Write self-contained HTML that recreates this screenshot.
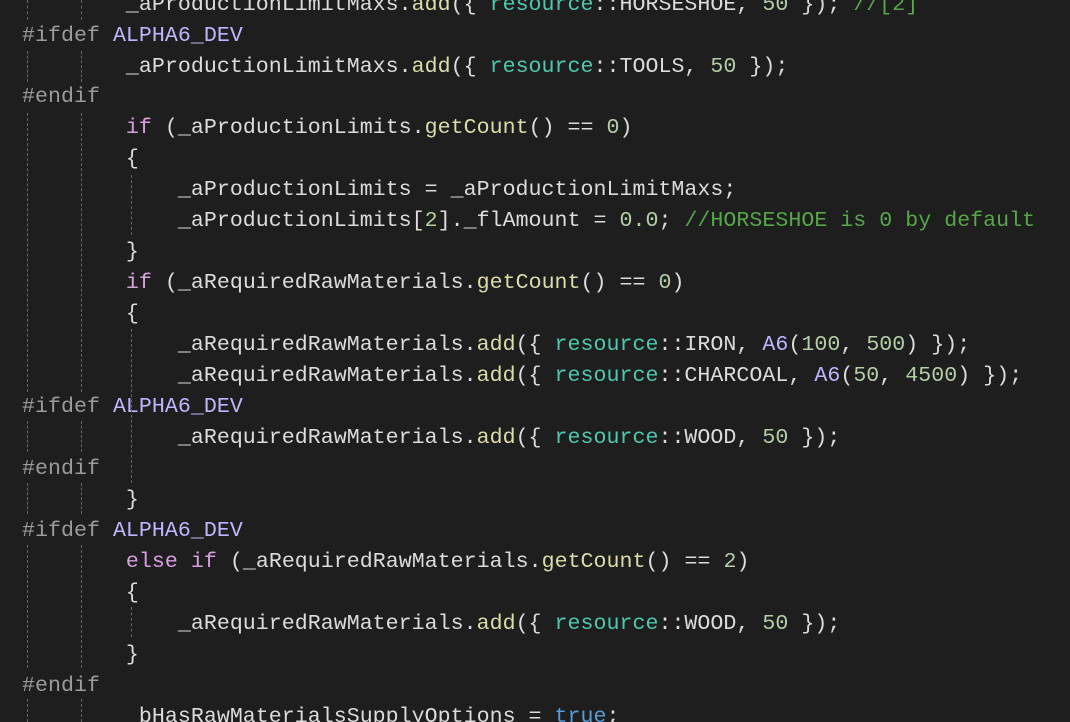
<!DOCTYPE html>
<html><head><meta charset="utf-8"><style>
html,body{margin:0;padding:0;background:#1e1e1e;width:1070px;height:722px;overflow:hidden;position:relative}
pre{position:absolute;left:22px;top:-10.4px;margin:0;font-family:"Liberation Mono",monospace;font-size:21.6px;letter-spacing:0.03px;line-height:30.95px;color:#dcdcdc;white-space:pre}
.p{color:#9b9b9b}.m{color:#beb7ff}.k{color:#d8a0df}.f{color:#dcdcaa}.t{color:#4ec9b0}.n{color:#b5cea8}.c{color:#57a64a}.b{color:#569cd6}
.g{position:absolute;width:0;border-left:1px dashed #666}
</style></head><body>
<pre>        _aProductionLimitMaxs.<span class="f">add</span>({ <span class="t">resource</span>::HORSESHOE, <span class="n">50</span> }); <span class="c">//[2]</span>
<span class="p">#ifdef</span> <span class="m">ALPHA6_DEV</span>
        _aProductionLimitMaxs.<span class="f">add</span>({ <span class="t">resource</span>::TOOLS, <span class="n">50</span> });
<span class="p">#endif</span>
        <span class="k">if</span> (_aProductionLimits.<span class="f">getCount</span>() == <span class="n">0</span>)
        {
            _aProductionLimits = _aProductionLimitMaxs;
            _aProductionLimits[<span class="n">2</span>]._flAmount = <span class="n">0.0</span>; <span class="c">//HORSESHOE is 0 by default</span>
        }
        <span class="k">if</span> (_aRequiredRawMaterials.<span class="f">getCount</span>() == <span class="n">0</span>)
        {
            _aRequiredRawMaterials.<span class="f">add</span>({ <span class="t">resource</span>::IRON, <span class="m">A6</span>(<span class="n">100</span>, <span class="n">500</span>) });
            _aRequiredRawMaterials.<span class="f">add</span>({ <span class="t">resource</span>::CHARCOAL, <span class="m">A6</span>(<span class="n">50</span>, <span class="n">4500</span>) });
<span class="p">#ifdef</span> <span class="m">ALPHA6_DEV</span>
            _aRequiredRawMaterials.<span class="f">add</span>({ <span class="t">resource</span>::WOOD, <span class="n">50</span> });
<span class="p">#endif</span>
        }
<span class="p">#ifdef</span> <span class="m">ALPHA6_DEV</span>
        <span class="k">else</span> <span class="k">if</span> (_aRequiredRawMaterials.<span class="f">getCount</span>() == <span class="n">2</span>)
        {
            _aRequiredRawMaterials.<span class="f">add</span>({ <span class="t">resource</span>::WOOD, <span class="n">50</span> });
        }
<span class="p">#endif</span>
        _bHasRawMaterialsSupplyOptions = <span class="b">true</span>;</pre>
<div class="g" style="left:27px;top:0;height:20px"></div>
<div class="g" style="left:81px;top:0;height:20px"></div>
<div class="g" style="left:27px;top:51px;height:31px"></div>
<div class="g" style="left:81px;top:51px;height:31px"></div>
<div class="g" style="left:27px;top:113px;height:279px"></div>
<div class="g" style="left:81px;top:113px;height:279px"></div>
<div class="g" style="left:27px;top:421px;height:31px"></div>
<div class="g" style="left:81px;top:421px;height:31px"></div>
<div class="g" style="left:27px;top:483px;height:31px"></div>
<div class="g" style="left:81px;top:483px;height:31px"></div>
<div class="g" style="left:27px;top:545px;height:123px"></div>
<div class="g" style="left:81px;top:545px;height:123px"></div>
<div class="g" style="left:27px;top:699px;height:23px"></div>
<div class="g" style="left:81px;top:699px;height:23px"></div>
<div class="g" style="left:131px;top:175px;height:60px"></div>
<div class="g" style="left:131px;top:329px;height:154px"></div>
<div class="g" style="left:131px;top:607px;height:30px"></div>
</body></html>
